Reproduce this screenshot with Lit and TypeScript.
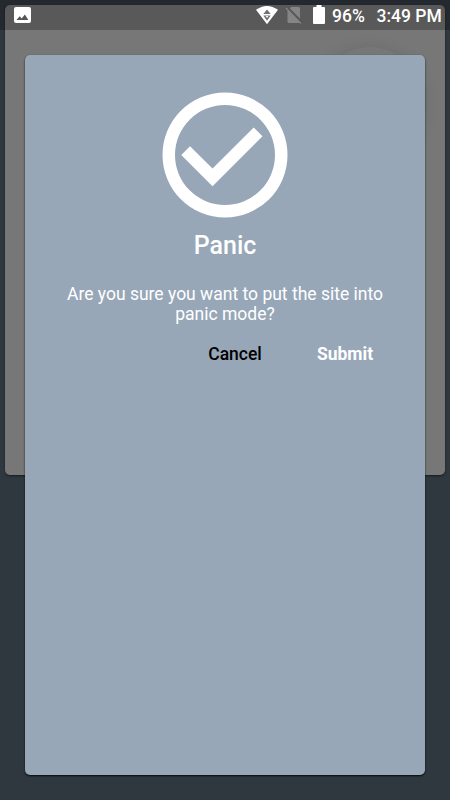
import { LitElement, html, css } from "lit";
import { customElement } from "lit/decorators.js";

@customElement("status-bar")
class StatusBar extends LitElement {
  static styles = css`
    :host {
      position: absolute;
      inset: 0 0 auto 0;
      height: 30px;
      box-sizing: border-box;
      display: flex;
      align-items: center;
      padding: 0 0 0 13px;
      background: rgba(0, 0, 0, 0.25);
      color: #fff;
      font: 500 17.5px/30px Roboto, sans-serif;
      white-space: pre;
    }
    svg { display: block; flex: none; }
    .spacer { flex: 1; }
    .wifi { margin-right: 7px; }
    .sim { margin-right: 10px; }
    .battery { margin-right: 7px; }
    .percent { width: 44.5px; padding-top: 2px; }
    .time { width: 73.5px; padding-top: 2px; }
  `;
  render() {
    return html`
      <svg width="18" height="30" viewBox="0 0 18 30">
        <rect x="1" y="7" width="17" height="16" rx="2" fill="#fff" />
        <path d="M3.5 20 6.7 16.2l2 2.3 3.2-3.9 3.4 5.4z" fill="#555" />
      </svg>
      <div class="spacer"></div>
      <svg class="wifi" width="22" height="30" viewBox="0 0 22 30">
        <path d="M0 9.8Q11 2.2 22 9.8L11 24.2z" fill="#fff" />
        <path d="M7.3 14 11 9.6l3.7 4.4zM7.3 15.6h7.4L11 20.8z" fill="#707070" />
        <path d="M9.6 16h2.8L11 18z" fill="#fff" />
      </svg>
      <svg class="sim" width="18" height="30" viewBox="0 0 18 30">
        <path d="M6.2 7h7.3q1.5 0 1.5 1.5V23H4q-1.5 0-1.5-1.5V11z" fill="#858585" />
        <path d="M2 7.5 17.5 23" stroke="#555" stroke-width="2.6" />
        <path d="M1 8 16.2 23.6" stroke="#858585" stroke-width="1.3" />
      </svg>
      <svg class="battery" width="12" height="30" viewBox="0 0 12 30">
        <path d="M3.5 5h5v2H11q1 0 1 1v15q0 1-1 1H1q-1 0-1-1V8q0-1 1-1h2.5z" fill="#fff" />
      </svg>
      <span class="percent">96%</span><span class="time">3:49 PM</span>
    `;
  }
}

@customElement("confirm-dialog")
class ConfirmDialog extends LitElement {
  static styles = css`
    :host {
      position: absolute;
      inset: 55px 25px 25px;
      box-sizing: border-box;
      display: flex;
      flex-direction: column;
      align-items: center;
      padding: 25px;
      border-radius: 5px;
      background: #97a7b8;
      box-shadow: 0 1px 2px rgba(0, 0, 0, 0.85);
      color: #fff;
      font: 17.5px/20px Roboto, sans-serif;
      text-align: center;
    }
    svg { display: block; flex: none; }
    h1 { margin: 1px 0 0; font-size: 25px; line-height: 30px; font-weight: 500; }
    p { margin: 23px 0 0; width: 330px; }
    .actions { display: flex; align-self: flex-end; margin-top: 20px; }
    button {
      width: 110px;
      padding: 0;
      border: 0;
      background: none;
      color: inherit;
      font: 700 17.5px/20px Roboto, sans-serif;
    }
    .cancel { color: #000; font-weight: 500; }
  `;
  render() {
    return html`
      <svg width="150" height="150" viewBox="0 0 24 24" fill="#fff">
        <path d="M12 2a10 10 0 1 0 0 20 10 10 0 0 0 0-20zm0 18a8 8 0 1 1 0-16 8 8 0 0 1 0 16zm4.59-12.42L10 14.17l-3.59-3.58L5 12l5 5 8-8z" />
      </svg>
      <h1>Panic</h1>
      <p>Are you sure you want to put the site into panic mode?</p>
      <div class="actions">
        <button class="cancel">Cancel</button>
        <button>Submit</button>
      </div>
    `;
  }
}

@customElement("app-root")
class AppRoot extends LitElement {
  static styles = css`
    :host {
      display: block;
      position: relative;
      box-sizing: border-box;
      width: 450px;
      height: 800px;
      padding: 5px;
      overflow: hidden;
      background: #2f373f;
    }
    .card {
      height: 470px;
      box-sizing: border-box;
      display: flex;
      justify-content: flex-end;
      padding: 42px 25px 0 0;
      overflow: hidden;
      border-radius: 5px;
      background: #777;
    }
    .shade { border-radius: 5px; box-shadow: 0 1px 2px rgba(0, 0, 0, 0.5); }
    .fab {
      width: 100px;
      height: 100px;
      border-radius: 50%;
      background: #777;
      box-shadow: 0 6px 20px rgba(0, 0, 0, 0.18);
    }
  `;
  render() {
    return html`
      <div class="shade"><div class="card"><div class="fab"></div></div></div>
      <confirm-dialog></confirm-dialog>
      <status-bar></status-bar>
    `;
  }
}
